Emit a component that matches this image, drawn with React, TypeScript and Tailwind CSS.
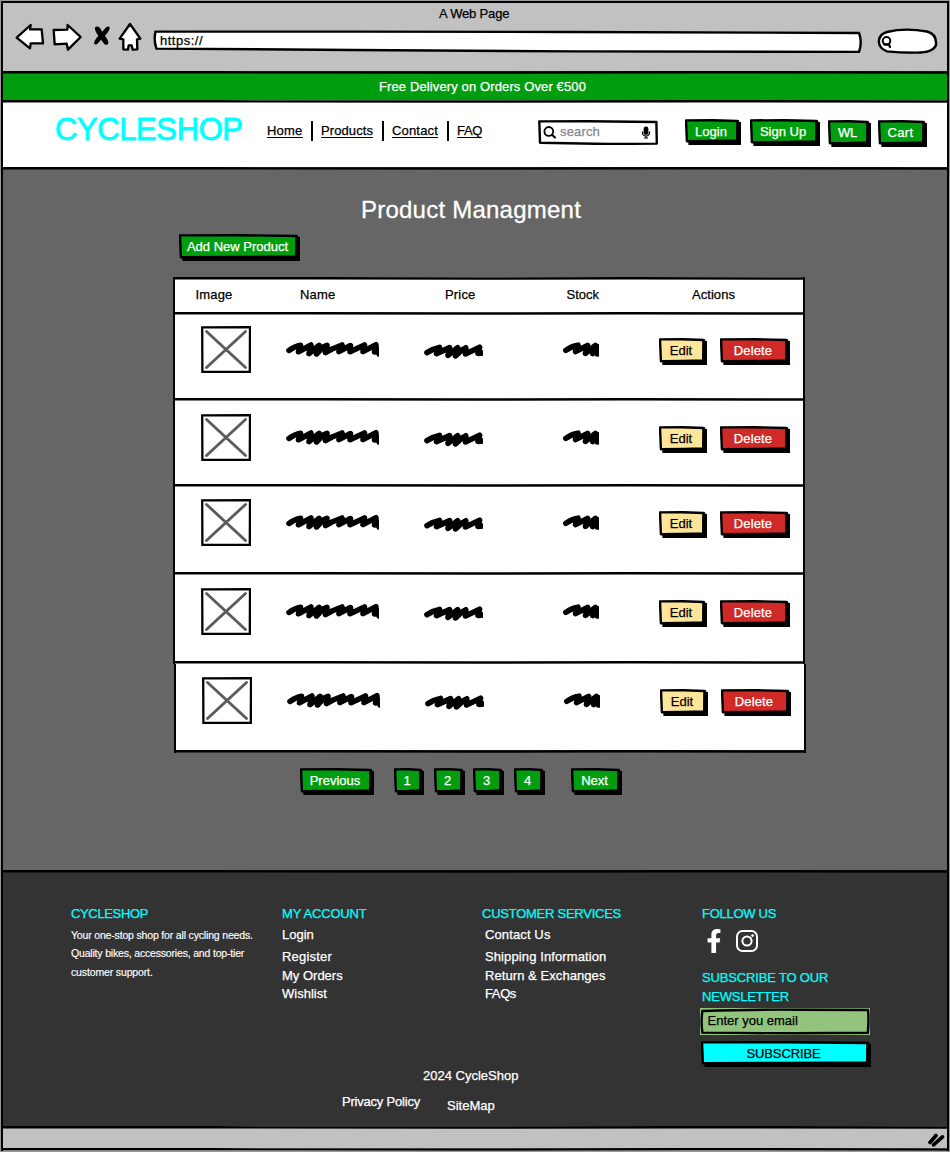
import React from "react";
import { FaFacebookF } from "react-icons/fa";

type BoxProps = { w: number; h: number; fill: string };

/* Hand-drawn button face with a hard drop shadow */
function ButtonFace({ w, h, fill }: BoxProps) {
  return (
    <svg className="absolute inset-0" width={w} height={h} viewBox={`0 0 ${w} ${h}`}>
      <path d={`M3.2 4 L${w - 2} 1.2 L${w - 1.6} 3 L${w} 3 L${w} ${h} L3.4 ${h} Z`} fill="#000" />
      <path
        d={`M1 1.4 L${w / 2} 1.2 L${w - 3.6} 2 L${w - 3.8} ${h - 4.6} L${w / 2} ${h - 4} L1.9 ${h - 3.8} Z`}
        fill={fill}
        stroke="#000"
        strokeWidth="2.4"
        strokeLinejoin="round"
      />
    </svg>
  );
}

const faces = {
  green: { fill: "#009e0f", text: "text-white" },
  sand: { fill: "#ffe599", text: "text-black" },
  red: { fill: "#cf2a27", text: "text-white" },
  cyan: { fill: "#00ffff", text: "text-black" },
};

function SketchButton({
  w,
  h = 26,
  tone = "green",
  className = "",
  children,
}: {
  w: number;
  h?: number;
  tone?: keyof typeof faces;
  className?: string;
  children: React.ReactNode;
}) {
  const face = faces[tone];
  return (
    <button
      className={`relative flex shrink-0 items-start justify-center pt-[5px] pr-[4px] leading-4 whitespace-nowrap ${face.text} ${className}`}
      style={{ width: w, height: h }}
    >
      <ButtonFace w={w} h={h} fill={face.fill} />
      <span className="relative">{children}</span>
    </button>
  );
}

/* Full-width hand-drawn divider */
function Rule({ className = "" }: { className?: string }) {
  return (
    <svg className={`block h-[3px] w-full shrink-0 ${className}`} viewBox="0 0 900 3" preserveAspectRatio="none">
      <path d="M0 1.2 L200 1.3 L430 1.5 L650 1.2 L900 1.5" fill="none" stroke="#000" strokeWidth="2.4" />
    </svg>
  );
}

function Scribble({ w, d, className = "" }: { w: number; d: string; className?: string }) {
  return (
    <svg className={`block shrink-0 ${className}`} width={w} height="18" viewBox={`0 0 ${w} 18`}>
      <path d={d} fill="none" stroke="#000" strokeWidth="5.6" strokeLinecap="round" strokeLinejoin="round" />
    </svg>
  );
}

const nameScribble =
  "M3 10.4 Q9 6 14.5 5.2 L12.5 11.8 L25 5 L23 13.6 L33 5.4 L30.5 14 L37 7 L41 5.4 L39.5 12.6 L46 9 L56 5 L53 11.6 L64.5 5.6 L64 11.8 L78.5 5 L77 11.6 L90 4.8 L88.5 12 L92 9 L93 14";
const priceScribble =
  "M3 10.6 Q9 6.6 15.5 5.4 L12.5 11.6 L25.6 5.6 L24 13.4 L33.6 5.8 L31.5 14 L38 8 L41.8 5.8 L41.5 12 L55.6 5.2 L54 11.4 L59 11";
const stockScribble = "M2.8 10.4 Q8 6.4 15 5.2 L12.6 11.6 L24.6 5.4 L22.5 13.4 L32.4 5.4 L29.8 13.6 L35 7 L34.5 14";

const rows = [
  { box: "h-[83px] pt-[11px]", rule: "bg-white" },
  { box: "h-[83px] pt-[13px]", rule: "bg-white" },
  { box: "h-[85px] pt-[12px]", rule: "bg-white" },
  { box: "h-[86px] pt-[13px]", rule: "bg-white" },
  { box: "h-[86px] pt-[13px]", rule: "bg-[#666]" },
];

function ProductRow({ box, rule, shifted }: { box: string; rule: string; shifted: boolean }) {
  return (
    <div className={`w-[632px] border-x-2 border-black bg-white ${shifted ? "ml-px" : ""}`}>
      <div className={`flex items-start ${box}`}>
        <svg className="ml-[26px] block shrink-0" width="50" height="47" viewBox="0 0 50 47">
          <path d="M1.2 1.4 L49 1.2 L48.8 45.8 L1.4 45.8 Z" fill="#fff" stroke="#000" strokeWidth="2.3" />
          <path d="M5.5 5.5 L44.5 41.5 M44.5 5.5 L5.5 41.5" stroke="#5c5c5c" strokeWidth="2.9" strokeLinecap="round" />
        </svg>
        <Scribble w={93} d={nameScribble} className="mt-[14px] ml-[35px]" />
        <Scribble w={59} d={priceScribble} className="mt-[16px] ml-[45px]" />
        <Scribble w={36} d={stockScribble} className="mt-[14px] ml-[80px]" />
        <SketchButton w={48} h={27} tone="sand" className="mt-[12px] ml-[60px]">
          Edit
        </SketchButton>
        <SketchButton w={70} h={27} tone="red" className="mt-[12px] ml-[13px] tracking-[0.15px]">
          Delete
        </SketchButton>
      </div>
      <Rule className={rule} />
    </div>
  );
}

function BrowserBar() {
  return (
    <div className="h-[68px] bg-[#c1c1c1]">
      <div className="relative h-[18px] pt-[3px] pl-[436px] leading-4 tracking-[-0.18px]">A Web Page</div>
      <div className="flex">
        <svg className="mt-px ml-[11px] block shrink-0" width="130" height="34" viewBox="42 66 390 102">
          <g fill="#fff" stroke="#000" strokeWidth="7" strokeLinejoin="round" strokeLinecap="round">
            <path d="M50 113 L92 75 L90 88 L125 88 L129 130 L92 130 L90 145 Z" />
            <path d="M161 90 L202 89 L203 75 L242 111 L204 149 L200 131 L164 133 Z" />
            <path d="M390 72 L421 116 L411 118 L412 148 L398 149 L395 136 L386 136 L384 149 L370 148 L370 118 L359 116 Z" />
            <path
              d="M285 82 Q293 76 300 84 L307 95 L317 83 Q324 76 329 82 Q330 92 315 107 Q328 124 324 132 Q317 138 311 130 L303 119 L294 130 Q286 137 282 130 Q282 122 295 107 Q283 92 285 82 Z"
              fill="#000"
              stroke="none"
            />
          </g>
        </svg>
        <div className="relative mt-[9px] ml-[9px] h-[23px] w-[710px] shrink-0">
          <svg className="absolute inset-0" width="710" height="23" viewBox="0 0 710 23">
            <path
              d="M2.5 1.6 L200 1.6 L420 2 L706 3 Q709.5 12 706 22 L420 21.4 L200 20 L3.4 18.6 Q0.5 10 2.5 1.6 Z"
              fill="#fff"
              stroke="#000"
              strokeWidth="2.4"
            />
          </svg>
          <span className="absolute top-[3px] left-[7px] leading-4 tracking-[0.5px]">https://</span>
        </div>
        <svg className="mt-[7px] ml-[14px] block shrink-0" width="61" height="27" viewBox="0 0 61 27">
          <path
            d="M10 4 Q28 -0.5 50 3.5 Q60 6 59 17 Q56 25 38 24.6 Q22 24.6 10 23.4 Q1 20 2 12 Q3 6 10 4 Z"
            fill="#fff"
            stroke="#000"
            strokeWidth="2.4"
          />
          <circle cx="9.5" cy="12.8" r="3.8" fill="none" stroke="#000" strokeWidth="2" />
          <path d="M7 16.4 L12 16.6 L13 19" fill="none" stroke="#000" strokeWidth="2.2" strokeLinecap="round" />
        </svg>
      </div>
    </div>
  );
}

function NavDivider({ className }: { className: string }) {
  return <span className={`mt-[18px] h-[20px] w-[2px] shrink-0 bg-black ${className}`} />;
}

function NavLink({ className, children }: { className: string; children: string }) {
  return (
    <a className={`mt-[20px] h-[15px] shrink-0 border-b border-black leading-4 ${className}`}>
      {children}
    </a>
  );
}

function ShopHeader() {
  return (
    <header className="flex h-[64px] items-start bg-white whitespace-nowrap">
      <div className="mt-[9px] ml-[52px] w-[212px] shrink-0 text-[31px] leading-9 tracking-[-0.4px] text-[#0ff] [-webkit-text-stroke:0.9px_#0ff]">
        CYCLESHOP
      </div>
      <NavLink className="w-[36px] tracking-[0.21px]">Home</NavLink>
      <NavDivider className="ml-[8px]" />
      <NavLink className="ml-[8px] w-[52px] tracking-[0.09px]">Products</NavLink>
      <NavDivider className="ml-[9px]" />
      <NavLink className="ml-[8px] w-[46px] tracking-[0.17px]">Contact</NavLink>
      <NavDivider className="ml-[9px]" />
      <NavLink className="ml-[8px] w-[25px] tracking-[-0.34px]">FAQ</NavLink>
      <div className="relative mt-[17px] ml-[56px] flex h-[25px] w-[120px] shrink-0">
        <svg className="absolute inset-0" width="120" height="25" viewBox="0 0 120 25">
          <path
            d="M1.3 1.4 L50 1.2 L118.4 2 L118.8 23.6 L70 24 L2 22.8 Z"
            fill="#fff"
            stroke="#000"
            strokeWidth="2.4"
            strokeLinejoin="round"
          />
          <circle cx="10.8" cy="11.4" r="4.4" fill="none" stroke="#000" strokeWidth="1.8" />
          <path d="M14 14.8 L17 17.6" stroke="#000" strokeWidth="2" strokeLinecap="round" />
          <rect x="105.6" y="6.5" width="4.8" height="8.5" rx="2.4" fill="#000" />
          <path
            d="M104.4 11.5 Q104.4 16 108 16 Q111.6 16 111.6 11.5 M108 16 V18 M106 18 H110"
            fill="none"
            stroke="#000"
            strokeWidth="1.2"
          />
        </svg>
        <span className="relative mt-[4px] ml-[22px] leading-4 tracking-[0.16px] text-[#85858d]">search</span>
      </div>
      <SketchButton w={56} className="mt-[16px] ml-[27px]">Login</SketchButton>
      <SketchButton w={70} h={27} className="mt-[16px] ml-[9px]">Sign Up</SketchButton>
      <SketchButton w={43} h={27} className="mt-[17px] ml-[8px] tracking-[-0.25px]">WL</SketchButton>
      <SketchButton w={49} h={27} className="mt-[17px] ml-[7px] tracking-[0.3px]">Cart</SketchButton>
    </header>
  );
}

function ProductTable() {
  return (
    <section className="ml-[170px] w-[634px]">
      <div className="w-[632px] border-x-2 border-black">
        <Rule className="bg-white" />
        <div className="flex h-[32px] bg-white pt-[7px] leading-4">
          <span className="ml-[20.5px] w-[104.5px] tracking-[0.17px]">Image</span>
          <span className="w-[145px] tracking-[0.21px]">Name</span>
          <span className="w-[121.5px] tracking-[0.18px]">Price</span>
          <span className="w-[125.5px]">Stock</span>
          <span className="tracking-[0.05px]">Actions</span>
        </div>
        <Rule className="bg-white" />
      </div>
      {rows.map((row, i) => (
        <ProductRow key={i} box={row.box} rule={row.rule} shifted={i === rows.length - 1} />
      ))}
    </section>
  );
}

function Footer() {
  return (
    <footer className="h-[253px] bg-[#333] whitespace-nowrap text-white">
      <div className="flex h-[194px] items-start pt-[33px]">
        <div className="ml-[68px] w-[211px] shrink-0">
          <h3 className="leading-4 tracking-[-0.35px] text-[#0ff]">CYCLESHOP</h3>
          <div className="mt-[4px] text-[10.5px] leading-[18.4px] [-webkit-text-stroke:0.15px_currentColor]">
            <p className="tracking-[-0.17px]">Your one-stop shop for all cycling needs.</p>
            <p className="tracking-[-0.18px]">Quality bikes, accessories, and top-tier</p>
            <p className="tracking-[-0.14px]">customer support.</p>
          </div>
        </div>
        <div className="w-[200px] shrink-0 leading-4">
          <h3 className="tracking-[-0.2px] text-[#0ff]">MY ACCOUNT</h3>
          <p className="mt-[5px]">Login</p>
          <p className="mt-[6px] tracking-[0.2px]">Register</p>
          <p className="mt-[3px]">My Orders</p>
          <p className="mt-[2px]">Wishlist</p>
        </div>
        <div className="w-[220px] shrink-0 leading-4">
          <h3 className="tracking-[-0.25px] text-[#0ff]">CUSTOMER SERVICES</h3>
          <div className="pl-[3px]">
            <p className="mt-[5px] tracking-[0.12px]">Contact Us</p>
            <p className="mt-[6px] tracking-[0.11px]">Shipping Information</p>
            <p className="mt-[3px] tracking-[0.07px]">Return &amp; Exchanges</p>
            <p className="mt-[2px] tracking-[-0.38px]">FAQs</p>
          </div>
        </div>
        <div className="shrink-0 leading-4">
          <h3 className="tracking-[-0.27px] text-[#0ff]">FOLLOW US</h3>
          <div className="mt-[7px] flex h-[24px] items-center">
            <FaFacebookF className="ml-[2.5px] h-[24px] w-[18px]" />
            <svg className="ml-[12.5px] block" width="24" height="24" viewBox="0 0 24 24">
              <g fill="none" stroke="#fff" strokeWidth="2">
                <rect x="2" y="2" width="20" height="20" rx="5.5" />
                <circle cx="12" cy="12" r="4.6" />
              </g>
              <circle cx="17.6" cy="6.6" r="1.4" fill="#fff" />
            </svg>
          </div>
          <h3 className="mt-[15px] leading-[19px] text-[#0ff]">
            <span className="block tracking-[-0.16px]">SUBSCRIBE TO OUR</span>
            <span className="block tracking-[-0.18px]">NEWSLETTER</span>
          </h3>
          <div className="relative mt-[2px] -ml-[2px] h-[27px] w-[170px] bg-[#93c47d]">
            <svg className="absolute inset-0" width="170" height="27" viewBox="0 0 170 27">
              <path
                d="M2.4 3 Q60 1.2 100 1.8 L168 2 Q169 12 167.8 24.8 Q90 25.8 2.4 24.6 Q0.8 14 2.4 3 Z"
                fill="none"
                stroke="#000"
                strokeWidth="2.4"
              />
            </svg>
            <span className="absolute top-[5px] left-[7.5px] text-black">Enter you email</span>
          </div>
          <SketchButton w={170} tone="cyan" className="mt-[6px] -ml-[1.5px] pt-[4px] tracking-[-0.13px]">
            SUBSCRIBE
          </SketchButton>
        </div>
      </div>
      <p className="mt-px ml-[420px] leading-4">2024 CycleShop</p>
      <div className="mt-[10px] ml-[339px] flex items-start leading-4">
        <span className="w-[105px] tracking-[-0.21px]">Privacy Policy</span>
        <span className="mt-[4px]">SiteMap</span>
      </div>
    </footer>
  );
}

export default function App() {
  return (
    <div className="h-[1152px] w-[950px] overflow-hidden bg-[#9a9a9a] pt-px pl-px font-['Liberation_Sans',Arial,sans-serif] text-[13px] text-black [-webkit-text-stroke:0.25px_currentColor]">
      <div className="flex w-[948px] flex-col border-x-2 border-t-2 border-black">
        <BrowserBar />
        <Rule className="bg-[#009e0f]" />
        <div className="h-[26px] bg-[#009e0f] pt-[5px] pl-[376px] leading-4 tracking-[0.12px] text-white">
          Free Delivery on Orders Over €500
        </div>
        <Rule className="bg-white" />
        <ShopHeader />
        <Rule className="bg-[#666]" />
        <main className="flex h-[700px] flex-col bg-[#666]">
          <h1 className="mt-[26px] ml-[358px] text-[24px] leading-[28px] tracking-[0.23px] text-white [-webkit-text-stroke:0.3px_#fff]">
            Product Managment
          </h1>
          <SketchButton w={121} h={27} className="mt-[10px] ml-[176px]">Add New Product</SketchButton>
          <div className="h-[16px] shrink-0" />
          <ProductTable />
          <nav className="mt-[15px] ml-[297px] flex">
            <SketchButton w={74} h={27}>Previous</SketchButton>
            <SketchButton w={30} h={27} className="ml-[20px]">1</SketchButton>
            <SketchButton w={31} h={27} className="ml-[10px]">2</SketchButton>
            <SketchButton w={31} h={27} className="ml-[8px]">3</SketchButton>
            <SketchButton w={31} h={27} className="ml-[10px]">4</SketchButton>
            <SketchButton w={51} h={27} className="ml-[26px]">Next</SketchButton>
          </nav>
        </main>
        <Rule className="bg-[#333]" />
        <Footer />
        <Rule className="bg-[#c1c1c1]" />
        <div className="flex h-[19px] justify-end bg-[#c1c1c1]">
          <svg className="mt-[4px] mr-[2px] block" width="17" height="15" viewBox="0 0 17 15">
            <path d="M2 9.5 L8 2.5 M5.5 11.8 L14.5 3.8" stroke="#000" strokeWidth="3.6" strokeLinecap="round" />
          </svg>
        </div>
        <Rule className="bg-white" />
      </div>
    </div>
  );
}
